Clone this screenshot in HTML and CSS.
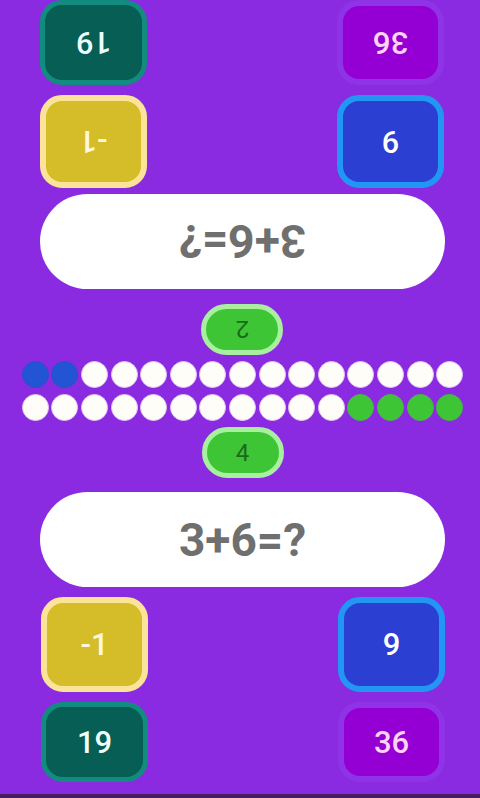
FILE: index.html
```html
<!DOCTYPE html>
<html lang="en">
<head>
  <meta charset="UTF-8">
  <title>Math Duel</title>
  <link rel="stylesheet" href="styles.css">
</head>
<body>

  <div class="game">

    <!-- player 2, seen upside down from the other side -->
    <div class="half flipped">
      <div class="dots">
        <span class="dot"></span><span class="dot"></span><span class="dot"></span>
        <span class="dot"></span><span class="dot"></span><span class="dot"></span>
        <span class="dot"></span><span class="dot"></span><span class="dot"></span>
        <span class="dot"></span><span class="dot"></span><span class="dot"></span>
        <span class="dot"></span><span class="dot blue"></span><span class="dot blue"></span>
      </div>
      <div class="score">2</div>
      <div class="question">3+6=?</div>
      <div class="row first">
        <div class="answer blue">9</div>
        <div class="answer yellow">-1</div>
      </div>
      <div class="row second">
        <div class="answer violet">36</div>
        <div class="answer teal">19</div>
      </div>
    </div>

    <!-- player 1 -->
    <div class="half">
      <div class="dots">
        <span class="dot"></span><span class="dot"></span><span class="dot"></span>
        <span class="dot"></span><span class="dot"></span><span class="dot"></span>
        <span class="dot"></span><span class="dot"></span><span class="dot"></span>
        <span class="dot"></span><span class="dot"></span><span class="dot green"></span>
        <span class="dot green"></span><span class="dot green"></span><span class="dot green"></span>
      </div>
      <div class="score">4</div>
      <div class="question">3+6=?</div>
      <div class="row first">
        <div class="answer yellow">-1</div>
        <div class="answer blue">9</div>
      </div>
      <div class="row second">
        <div class="answer teal">19</div>
        <div class="answer violet">36</div>
      </div>
    </div>

    <div class="bottom"></div>
  </div>

</body>
</html>
```

FILE: styles.css
```css
* { box-sizing: border-box; }
body { margin: 0; background: #8a2be2; font-family: Roboto, "Noto Sans", sans-serif; overflow: hidden; }

.game { width: 485px; height: 798px; display: flex; flex-direction: column; }
.half { height: 391px; display: flex; flex-direction: column; align-items: center; padding-top: 3px; }
.half.flipped { transform: rotate(180deg); }

.dots { display: flex; gap: 2.6px; }
.dot { width: 27px; height: 27px; border-radius: 50%; background: #fffdf8; border: 1px solid #e4c6f6; }
.dot.blue { background: #2354d4; border-color: #2a50c8; }
.dot.green { background: #3ec536; border-color: #47b845; }

.score { margin-top: 6px; width: 82px; height: 51px; border-radius: 26px; background: #3ec536; border: 5px solid #a8f0a0;
  display: flex; align-items: center; justify-content: center; font-size: 24px; color: #1c6a1c; }

.question { margin-top: 14px; width: 405px; height: 95px; border-radius: 48px; background: #fff;
  display: flex; align-items: center; justify-content: center; font-size: 46px; font-weight: 700; color: #6f6f6f; }
.flipped .question { margin-top: 15px; }

.row { align-self: stretch; display: flex; justify-content: space-between; padding: 0 40px 0 41px; margin-top: 10px; }
.row.first .answer { height: 95px; }
.row.second .answer { height: 80px; }
.flipped .row.first { margin-top: 6px; }
.flipped .row.first .answer { height: 93px; }
.flipped .row.second .answer { height: 85px; }

.answer { width: 107px; border-radius: 22px; border: 6px solid;
  display: flex; align-items: center; justify-content: center; font-size: 31px; font-weight: 500; }
.answer.yellow { background: #d5bc29; border-color: #fce39a; color: #fff8dc; }
.answer.blue { background: #2b40d2; border-color: #2196f3; color: #fff; }
.answer.teal { background: #075e54; border-color: #128c7e; border-width: 5px; color: #effffb; }
.answer.violet { background: #9400d3; border-color: #8f33e6; color: #ffd3f6; }

.bottom { flex: 1; border-bottom: 4px solid #43205c; }
```
